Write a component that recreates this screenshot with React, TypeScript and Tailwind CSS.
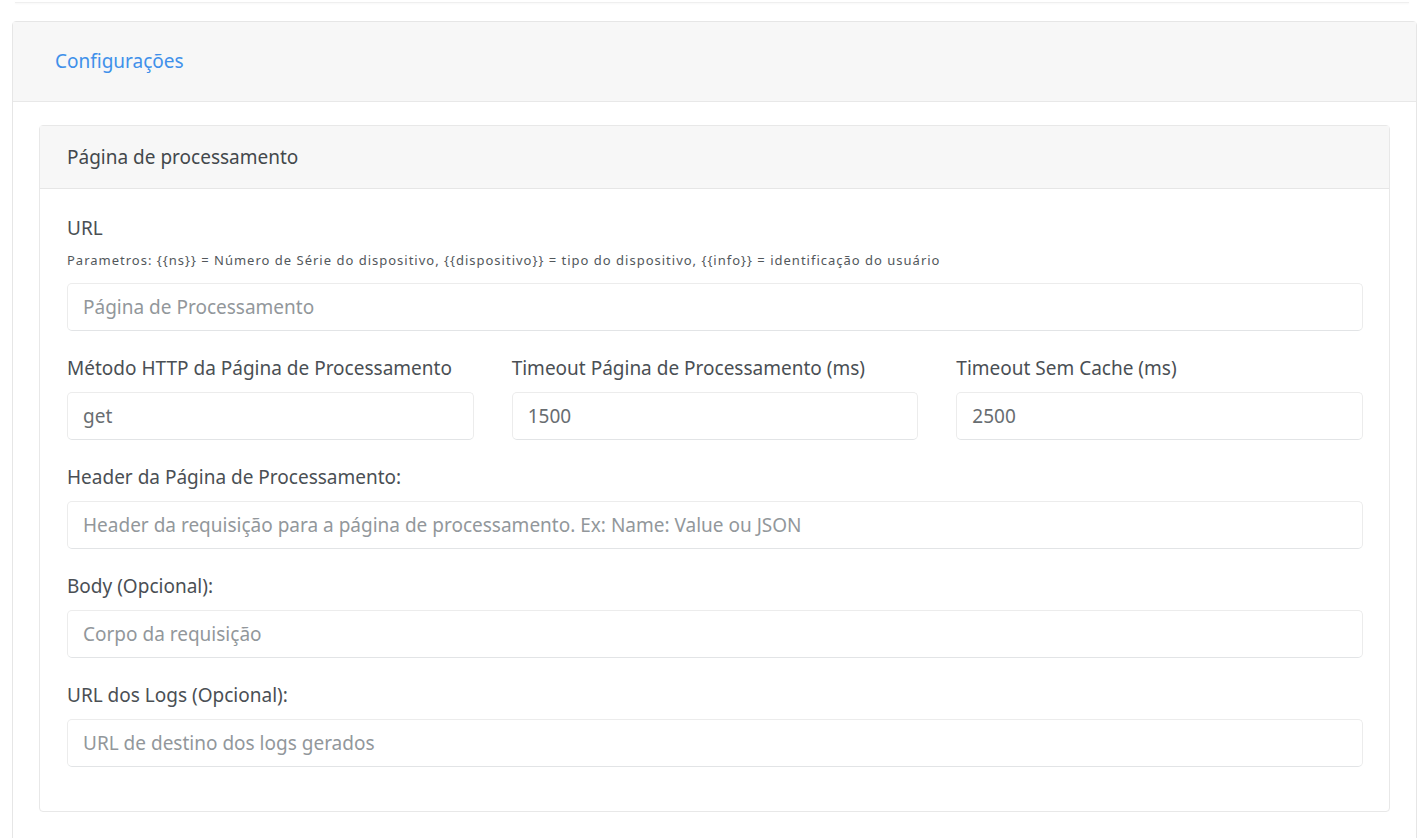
import React from "react";

const font = { fontFamily: '"Noto Sans", "Open Sans", sans-serif' };

function Input({ placeholder, value }: { placeholder?: string; value?: string }) {
  return (
    <div className="h-[48px] rounded-[5px] border border-[#ececec] border-b-[#e2e4e6] bg-white flex items-center px-[15px] text-[19px]">
      {value ? (
        <span className="text-[#686d71]">{value}</span>
      ) : (
        <span className="text-[#92979b]">{placeholder}</span>
      )}
    </div>
  );
}

function Field({ label, placeholder, value }: { label: string; placeholder?: string; value?: string }) {
  return (
    <div className="flex flex-col">
      <label className="text-[19px] leading-[25px] text-[#4a4f54] mb-[11px]">{label}</label>
      <Input placeholder={placeholder} value={value} />
    </div>
  );
}

export default function App() {
  return (
    <div className="w-[1424px] h-[838px] bg-white overflow-hidden" style={font}>
      <div className="mx-[15px] h-[3px] border-b border-[#efefef] shadow-[0_1px_2px_rgba(0,0,0,0.03)]" />
      <div className="ml-[12px] mr-[7px] mt-[18px] border border-[#e6e6e6] rounded-t-[4px] h-[900px]">
        <div className="h-[80px] bg-[#f7f7f7] border-b border-[#e8e8e8] flex items-center pl-[42px]">
          <span className="text-[19px] text-[#4090ea]">Configurações</span>
        </div>
        <div className="pt-[23px] px-[26px]">
          <div className="border border-[#e8e8e8] rounded-[4px] pb-[44px]">
            <div className="h-[63px] bg-[#f7f7f7] border-b border-[#e6e6e6] flex items-center pl-[27px]">
              <span className="text-[19px] text-[#43484c]">Página de processamento</span>
            </div>
            <div className="pt-[27px] pl-[27px] pr-[26px] flex flex-col gap-[25px]">
              <div className="flex flex-col">
                <label className="text-[19px] leading-[25px] text-[#4a4f54] mb-[10px]">URL</label>
                <div className="text-[13px] leading-[18px] tracking-[1px] text-[#52575b] mb-[14px] whitespace-nowrap">
                  Parametros: {"{{ns}}"} = Número de Série do dispositivo, {"{{dispositivo}}"} = tipo do dispositivo, {"{{info}}"} = identificação do usuário
                </div>
                <Input placeholder="Página de Processamento" />
              </div>
              <div className="grid grid-cols-3 gap-[38px]">
                <Field label="Método HTTP da Página de Processamento" value="get" />
                <Field label="Timeout Página de Processamento (ms)" value="1500" />
                <Field label="Timeout Sem Cache (ms)" value="2500" />
              </div>
              <Field label="Header da Página de Processamento:" placeholder="Header da requisição para a página de processamento. Ex: Name: Value ou JSON" />
              <Field label="Body (Opcional):" placeholder="Corpo da requisição" />
              <Field label="URL dos Logs (Opcional):" placeholder="URL de destino dos logs gerados" />
            </div>
          </div>
        </div>
      </div>
    </div>
  );
}
